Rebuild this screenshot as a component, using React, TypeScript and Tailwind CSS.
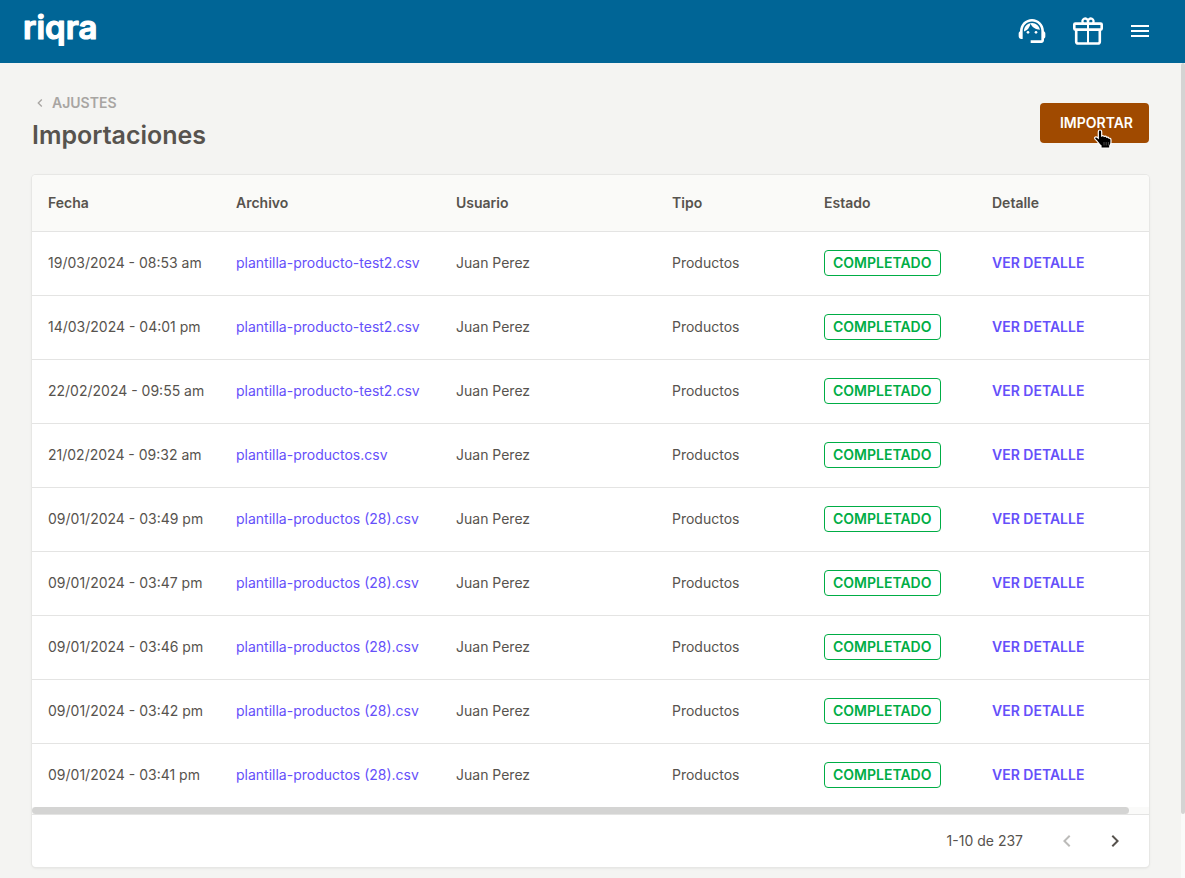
import React from 'react';
import { MdChevronLeft, MdChevronRight, MdMenu, MdSupportAgent } from 'react-icons/md';

const imports = [
  { date: '19/03/2024 - 08:53 am', file: 'plantilla-producto-test2.csv' },
  { date: '14/03/2024 - 04:01 pm', file: 'plantilla-producto-test2.csv' },
  { date: '22/02/2024 - 09:55 am', file: 'plantilla-producto-test2.csv' },
  { date: '21/02/2024 - 09:32 am', file: 'plantilla-productos.csv' },
  { date: '09/01/2024 - 03:49 pm', file: 'plantilla-productos (28).csv' },
  { date: '09/01/2024 - 03:47 pm', file: 'plantilla-productos (28).csv' },
  { date: '09/01/2024 - 03:46 pm', file: 'plantilla-productos (28).csv' },
  { date: '09/01/2024 - 03:42 pm', file: 'plantilla-productos (28).csv' },
  { date: '09/01/2024 - 03:41 pm', file: 'plantilla-productos (28).csv' },
];

const GiftIcon = () => (
  <svg className="h-8 w-8" viewBox="0 0 32 32" fill="none" stroke="currentColor" strokeWidth="2.6" strokeLinejoin="round" aria-hidden="true">
    <rect x="2.3" y="8.6" width="27.4" height="6" rx="1" />
    <path d="M4.2 14.6v12.2a1.700 1.700 0 0 0 1.700 1.700h20.200a1.700 1.700 0 0 0 1.700-1.700V14.600" />
    <path d="M16 8v20.500" strokeWidth="2" />
    <path d="M16 8.600v-2.300a2.800 2.800 0 1 0-4.700 2.100" strokeWidth="2.3" />
    <path d="M16 8.600v-2.300a2.800 2.800 0 1 1 4.700 2.100" strokeWidth="2.3" />
  </svg>
);

const PointerIcon = () => (
  <svg className="pointer-events-none absolute left-[53px] top-[26px]" width="20" height="22" viewBox="0 0 20 22" aria-hidden="true">
    <path
      d="M7 1c1 0 1.700.7 1.700 1.700V7c.8-.5 2-.4 2.500.5.800-.4 2-.2 2.500.7 1-.3 1.900.1 2.200.9 1.300-.1 2.100.6 2.100 1.900v2.200c0 1.500-.6 2.500-1.200 3.600V19H8v-2.200c-1.700-1.300-2.800-3.300-4-4.700C2.600 10.700 1.200 10 1.600 8.800c.4-1 1.700-1.200 2.600-.5l1.100.9V2.700C5.300 1.700 6 1 7 1Z"
      fill="#000"
      stroke="#fff"
      strokeWidth="1.2"
    />
    <path d="M11 13v3.500M13.200 13v3.500M15.400 13v3.500" stroke="#fff" strokeWidth="0.300" />
  </svg>
);

const Header = () => (
  <header className="flex h-[63px] shrink-0 items-center justify-between bg-[#006596] pb-px pl-6 pr-[33px] text-white">
    <a href="#" aria-label="riqra">
      <svg width="84" height="52" viewBox="0 0 84 52">
        <text
          x="-1"
          y="34"
          fontSize="33"
          fontWeight="600"
          fill="currentColor"
          stroke="currentColor"
          strokeWidth="1.2"
          strokeLinejoin="round"
        >
          riqra
        </text>
      </svg>
    </a>
    <div className="flex items-center gap-6">
      <button type="button" aria-label="Soporte">
        <MdSupportAgent className="h-8 w-8" />
      </button>
      <button type="button" aria-label="Novedades">
        <GiftIcon />
      </button>
      <button type="button" aria-label="Menú">
        <MdMenu className="h-6 w-6" />
      </button>
    </div>
  </header>
);

const ImportsTable = () => (
  <table className="w-full table-fixed text-left">
    <colgroup>
      <col className="w-[188px]" />
      <col className="w-[220px]" />
      <col className="w-[216px]" />
      <col className="w-[152px]" />
      <col className="w-[168px]" />
      <col />
    </colgroup>
    <thead className="bg-[#fafaf8]">
      <tr className="h-14 border-b border-[#e4e4e3]">
        <th className="px-4 font-semibold">Fecha</th>
        <th className="px-4 font-semibold">Archivo</th>
        <th className="px-4 font-semibold">Usuario</th>
        <th className="px-4 font-semibold">Tipo</th>
        <th className="px-4 font-semibold">Estado</th>
        <th className="px-4 font-semibold">Detalle</th>
      </tr>
    </thead>
    <tbody>
      {imports.map((item) => (
        <tr key={item.date} className="h-16 whitespace-nowrap border-b border-[#e4e4e3] last:border-b-0">
          <td className="px-4">{item.date}</td>
          <td className="px-4">
            <a href="#" className="text-[#6550fa]">{item.file}</a>
          </td>
          <td className="px-4">Juan Perez</td>
          <td className="px-4">Productos</td>
          <td className="px-4">
            <span className="inline-flex h-[26px] items-center rounded border border-[#00ad45] px-2 font-semibold text-[#00ad45]">
              COMPLETADO
            </span>
          </td>
          <td className="px-4">
            <a href="#" className="font-semibold text-[#6550fa]">VER DETALLE</a>
          </td>
        </tr>
      ))}
    </tbody>
  </table>
);

const App = () => {
  return (
    <div className="flex min-h-screen flex-col bg-[#f4f4f2] font-['Inter',sans-serif] text-sm text-[#57534e]">
      <Header />
      <div className="flex flex-1">
        <main className="min-w-0 flex-1 px-8 pb-2 pt-7">
          <div className="mb-5 flex items-center justify-between">
            <div>
              <a href="#" className="flex items-center gap-1 font-semibold leading-6 text-[#a8a5a2]">
                <MdChevronLeft className="h-4 w-4" />
                AJUSTES
              </a>
              <h1 className="text-[25px] font-semibold leading-10">Importaciones</h1>
            </div>
            <div className="relative">
              <button type="button" className="h-10 rounded bg-[#a04a00] pl-5 pr-4 font-semibold text-white">
                IMPORTAR
              </button>
              <PointerIcon />
            </div>
          </div>

          <section className="overflow-hidden rounded bg-white shadow-[0_0_0_1px_#e7e7e5,0_1px_3px_#0000001a]">
            <ImportsTable />
            <div className="h-[7px] bg-[#fafaf9] pr-5">
              <div className="h-full rounded-full bg-[#d4d4d3]" />
            </div>
            <div className="flex h-[53px] items-center justify-end border-t border-[#e4e4e3] pr-[22px]">
              <span className="mr-8">1-10 de 237</span>
              <button type="button" aria-label="Página anterior" disabled className="mr-6 text-[#bcbbb9]">
                <MdChevronLeft className="h-6 w-6" />
              </button>
              <button type="button" aria-label="Página siguiente">
                <MdChevronRight className="h-6 w-6" />
              </button>
            </div>
          </section>
        </main>
        <div className="w-1 bg-[#fafaf9] pb-16">
          <div className="h-full rounded-full bg-[#d4d4d3]" />
        </div>
      </div>
    </div>
  );
};

export default App;
